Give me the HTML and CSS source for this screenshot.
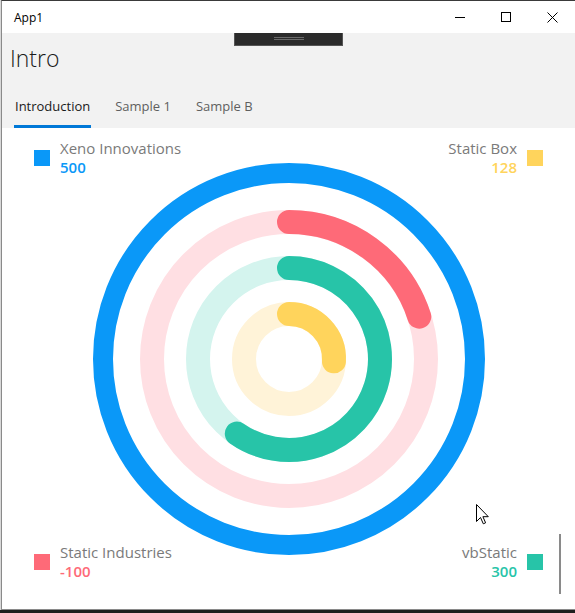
FILE: index.html
```html
<!DOCTYPE html>
<html lang="en">
<head>
<meta charset="utf-8">
<title>App1</title>
<link rel="stylesheet" href="styles.css">
</head>
<body>
<div class="desktop">
  <div class="window">
    <div class="titlebar">
      <span class="app-title">App1</span>
      <div class="controls">
        <span class="ctl"><svg width="10" height="10" viewBox="0 0 10 10"><path d="M0 5.5H10" stroke="#000" stroke-width="1"/></svg></span>
        <span class="ctl"><svg width="10" height="10" viewBox="0 0 10 10"><rect x="0.5" y="0.5" width="9" height="9" fill="none" stroke="#000" stroke-width="1"/></svg></span>
        <span class="ctl"><svg width="11" height="11" viewBox="0 0 11 11"><path d="M0.5 0.5L10.5 10.5M10.5 0.5L0.5 10.5" stroke="#000" stroke-width="1"/></svg></span>
      </div>
    </div>
    <div class="header">
      <div class="handle"><span class="grip"></span></div>
      <h1 class="page-title">Intro</h1>
      <nav class="tabs">
        <span class="tab active">Introduction</span>
        <span class="tab">Sample 1</span>
        <span class="tab">Sample B</span>
      </nav>
    </div>
    <div class="content">
      <svg class="chart" width="400" height="400" viewBox="0 0 400 400">
        <circle cx="200" cy="200" r="186" fill="none" stroke="#0a98f8" stroke-width="20"/>
        <circle cx="200" cy="200" r="137" fill="none" stroke="#ffdfe3" stroke-width="24"/>
        <path d="M200 63A137 137 0 0 1 330.30 157.67" fill="none" stroke="#fe6a78" stroke-width="24" stroke-linecap="round"/>
        <circle cx="200" cy="200" r="91" fill="none" stroke="#d4f4ee" stroke-width="24"/>
        <path d="M200 109A91 91 0 1 1 147.80 274.55" fill="none" stroke="#27c4a8" stroke-width="24" stroke-linecap="round"/>
        <circle cx="200" cy="200" r="45" fill="none" stroke="#fff3d8" stroke-width="24"/>
        <path d="M200 155A45 45 0 0 1 244.94 202.35" fill="none" stroke="#ffd45c" stroke-width="24" stroke-linecap="round"/>
      </svg>
      <div class="legend top left">
        <span class="swatch blue"></span>
        <div class="legend-text"><span class="name">Xeno Innovations</span><span class="value blue-text">500</span></div>
      </div>
      <div class="legend top right">
        <div class="legend-text"><span class="name">Static Box</span><span class="value yellow-text">128</span></div>
        <span class="swatch yellow"></span>
      </div>
      <div class="legend bottom left">
        <span class="swatch red"></span>
        <div class="legend-text"><span class="name">Static Industries</span><span class="value red-text">-100</span></div>
      </div>
      <div class="legend bottom right">
        <div class="legend-text"><span class="name">vbStatic</span><span class="value teal-text">300</span></div>
        <span class="swatch teal"></span>
      </div>
      <span class="scroll-indicator"></span>
      <svg class="cursor" width="13" height="21" viewBox="0 0 13 21"><path d="M0.5 0.5V17.5L4.5 13.5L7.3 19.8L9.6 18.8L6.9 12.7H12.3Z" fill="#fff" stroke="#000" stroke-width="1" stroke-linejoin="round"/></svg>
    </div>
  </div>
  <div class="desk-strip"></div>
</div>
</body>
</html>
```
FILE: styles.css
```css
* { box-sizing: border-box; }
html, body { margin: 0; padding: 0; }
body {
  width: 575px;
  height: 613px;
  overflow: hidden;
  font-family: "Segoe UI", "Open Sans", "Noto Sans", sans-serif;
}
.desktop {
  width: 575px;
  height: 613px;
  background: #d8d8d8;
  display: flex;
  flex-direction: column;
}
.window {
  margin-left: 1px;
  width: 574px;
  height: 610px;
  border-left: 1px solid #8a8a8a;
  border-top: 1px solid #3a3a3a;
  border-bottom: 1px solid #8a8a8a;
  display: flex;
  flex-direction: column;
  background: #fff;
  position: relative;
}
.desk-strip {
  flex: 1;
  background: #1e1e1e;
}
.titlebar {
  height: 32px;
  display: flex;
  align-items: center;
  justify-content: space-between;
  background: #fff;
}
.app-title {
  font-size: 12px;
  color: #000;
  padding-left: 12px;
  padding-top: 1px;
}
.controls { display: flex; height: 100%; }
.ctl {
  width: 46px;
  height: 100%;
  display: flex;
  align-items: center;
  justify-content: center;
}
.header {
  height: 95px;
  background: #f2f2f2;
  position: relative;
  display: flex;
  flex-direction: column;
}
.handle {
  position: absolute;
  left: 232px;
  top: 0;
  width: 109px;
  height: 13px;
  background: #2b2b2b;
  border: 1px solid #555;
  border-top: none;
  display: flex;
  justify-content: center;
  padding-top: 4px;
}
.grip {
  width: 30px;
  height: 3px;
  border-top: 1px solid #6a6a6a;
  border-bottom: 1px solid #6a6a6a;
}
.page-title {
  margin: 0;
  padding: 9px 0 0 8px;
  font-size: 23px;
  font-weight: 300;
  color: #1a1a1a;
  line-height: 32px;
}
.tabs {
  margin-top: auto;
  display: flex;
  gap: 23px;
  padding-left: 12px;
}
.tab {
  font-size: 13px;
  color: #5f5f5f;
  padding: 0 1px 10px;
  border-bottom: 3px solid transparent;
  line-height: 18px;
}
.tab.active {
  color: #1a1a1a;
  border-bottom-color: #0078d7;
}
.content {
  flex: 1;
  display: grid;
  grid-template: 1fr / 1fr;
  position: relative;
  padding: 11px 32px 28px 32px;
}
.chart {
  grid-area: 1 / 1;
  justify-self: center;
  align-self: start;
  margin-top: 20px;
}
.legend {
  grid-area: 1 / 1;
  display: flex;
  align-items: center;
  gap: 10px;
}
.legend.top { align-self: start; }
.legend.bottom { align-self: end; }
.legend.left { justify-self: start; }
.legend.right { justify-self: end; }
.legend-text {
  display: flex;
  flex-direction: column;
  font-size: 15px;
  line-height: 19px;
}
.legend.right .legend-text { align-items: flex-end; }
.name { color: #7a7a7a; }
.value { font-weight: 600; }
.swatch { width: 16px; height: 16px; display: block; }
.blue { background: #0a98f8; }
.yellow { background: #ffd45c; }
.red { background: #fe6a78; }
.teal { background: #27c4a8; }
.blue-text { color: #0a98f8; }
.yellow-text { color: #ffd45c; }
.red-text { color: #fe6a78; }
.teal-text { color: #27c4a8; }
.scroll-indicator {
  position: absolute;
  left: 557px;
  top: 406px;
  width: 2px;
  height: 60px;
  background: #8a8a8a;
}
.cursor {
  position: absolute;
  left: 474px;
  top: 376px;
}
```
